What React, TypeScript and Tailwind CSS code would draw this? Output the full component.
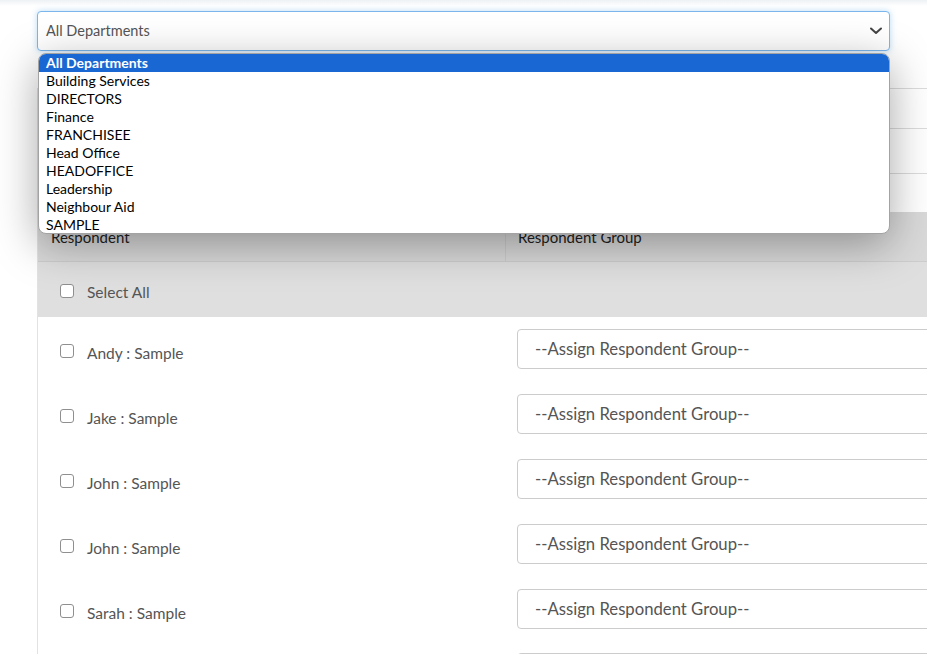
import React from "react";

const departments = [
  "All Departments",
  "Building Services",
  "DIRECTORS",
  "Finance",
  "FRANCHISEE",
  "Head Office",
  "HEADOFFICE",
  "Leadership",
  "Neighbour Aid",
  "SAMPLE",
];

const people = ["Andy : Sample", "Jake : Sample", "John : Sample", "John : Sample", "Sarah : Sample"];

function Checkbox() {
  return <span className="block w-[14px] h-[14px] rounded-[3px] border border-[#8f8f8f] bg-white shrink-0" />;
}

export default function App() {
  return (
    <div className="relative w-[927px] h-[654px] overflow-hidden bg-white text-[#555]" style={{ fontFamily: "Lato, 'Noto Sans', sans-serif" }}>
      <div className="absolute left-0 right-0 top-0 h-[6px] bg-gradient-to-b from-[#eef1f4] to-white" />
      <div className="relative pl-[37px] pt-[11px]">
        {/* Select */}
        <div className="w-[853px] h-[40px] rounded-[4px] border border-[#7ab6ec] bg-white shadow-[0_0_6px_rgba(102,175,233,0.45)] flex items-center justify-between pl-[8px] pr-[6px]">
          <span className="text-[14.5px] text-[#555]">All Departments</span>
          <svg width="14" height="10" viewBox="0 0 14 10">
            <path d="M2 2.5 L7 7 L12 2.5" fill="none" stroke="#444" strokeWidth="2" strokeLinecap="round" strokeLinejoin="round" />
          </svg>
        </div>

        {/* Form rows behind dropdown */}
        <div className="mt-[37px] border-l border-[#e2e2e2]">
          <div className="h-[40px] border-t border-[#dcdcdc]" />
          <div className="h-[45px] border-t border-[#dcdcdc]" />
          <div className="h-[39px] border-t border-[#dcdcdc]" />
        </div>

        {/* Table */}
        <div className="w-[960px] border-l border-[#e2e2e2]">
          <div className="flex h-[50px] bg-[#d9d9d9] border-b border-[#cdcdcd] text-[15px] text-[#222]">
            <div className="w-[468px] border-r border-[#cccccc] pl-[13px] pt-[14px]">Respondent</div>
            <div className="flex-1 pl-[12px] pt-[14px]">Respondent Group</div>
          </div>
          <div className="flex items-start h-[55px] bg-[#dfdfdf] pl-[22px] pt-[22px] gap-[13px] text-[15.5px]">
            <Checkbox />
            <span className="leading-[18px] mt-[-1px]">Select All</span>
          </div>
          {people.map((p, i) => (
            <div key={i} className="flex h-[65px]">
              <div className="w-[479px] flex items-start pl-[22px] pt-[27px] gap-[13px] text-[15.5px] text-[#555]">
                <Checkbox />
                <span className="leading-[18px]">{p}</span>
              </div>
              <div className="flex-1 pt-[12px]">
                <div className="h-[40px] rounded-[4px] border border-[#cccccc] bg-white flex items-center pl-[17px] pt-[2px] text-[16.7px] text-[#555]">
                  --Assign Respondent Group--
                </div>
              </div>
            </div>
          ))}
          <div className="flex h-[20px]">
            <div className="w-[479px]" />
            <div className="flex-1 pt-[11px]">
              <div className="h-[40px] rounded-[4px] border border-[#cccccc] bg-white" />
            </div>
          </div>
        </div>
      </div>

      {/* Open dropdown list */}
      <div className="absolute left-[38px] top-[53px] w-[852px] h-[181px] rounded-[8px] border border-[#a3a3a3] bg-white overflow-hidden shadow-[0_10px_44px_rgba(0,0,0,0.35)]">
        {departments.map((d, i) => (
          <div
            key={d}
            className={
              i === 0
                ? "h-[18px] leading-[17px] pl-[7px] text-[14px] font-bold text-white bg-[#1967d2]"
                : "h-[18px] leading-[17px] pl-[7px] text-[14px] text-black"
            }
          >
            {d}
          </div>
        ))}
      </div>
    </div>
  );
}
